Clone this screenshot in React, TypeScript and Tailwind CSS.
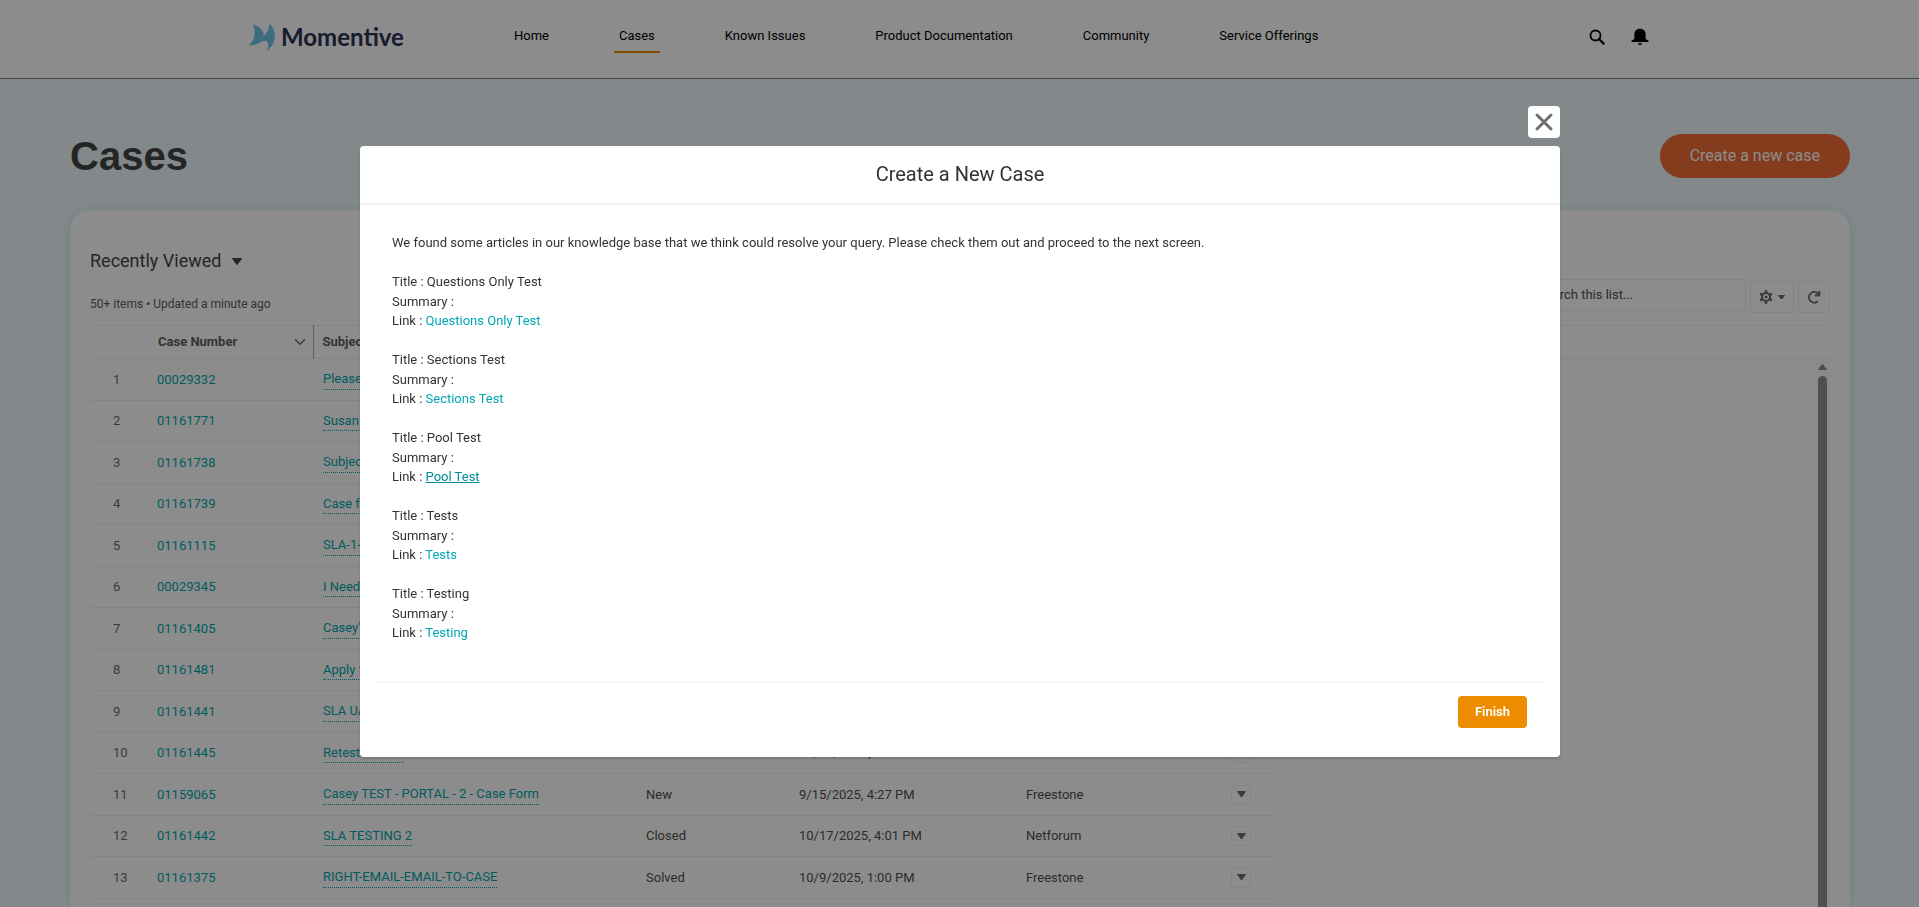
import { useState } from 'react';
import { ChevronDown, X } from 'lucide-react';

interface CaseRow {
    number: string;
    subject: string;
    status: string;
    opened: string;
    product: string;
}

const navItems = ['Home', 'Cases', 'Known Issues', 'Product Documentation', 'Community', 'Service Offerings'];

const cases: CaseRow[] = [
    { number: '00029332', subject: 'Please review', status: 'New', opened: '10/20/2025, 9:12 AM', product: 'Freestone' },
    { number: '01161771', subject: 'Susan Test', status: 'New', opened: '10/20/2025, 8:40 AM', product: 'Freestone' },
    { number: '01161738', subject: 'Subject Test', status: 'New', opened: '10/17/2025, 2:31 PM', product: 'Netforum' },
    { number: '01161739', subject: 'Case form', status: 'New', opened: '10/17/2025, 2:35 PM', product: 'Netforum' },
    { number: '01161115', subject: 'SLA-1-Test', status: 'Closed', opened: '10/2/2025, 1:15 PM', product: 'Freestone' },
    { number: '00029345', subject: 'I Need Help', status: 'New', opened: '9/29/2025, 3:08 PM', product: 'Freestone' },
    { number: '01161405', subject: "Casey's Test", status: 'Solved', opened: '10/9/2025, 4:20 PM', product: 'Freestone' },
    { number: '01161481', subject: 'Apply for Test', status: 'New', opened: '10/17/2025, 5:10 PM', product: 'Netforum' },
    { number: '01161441', subject: 'SLA UAT', status: 'Closed', opened: '10/17/2025, 3:55 PM', product: 'Netforum' },
    { number: '01161445', subject: 'Retest - SLA 2', status: 'New', opened: '10/17/2025, 4:12 PM', product: 'Netforum' },
    { number: '01159065', subject: 'Casey TEST - PORTAL - 2 - Case Form', status: 'New', opened: '9/15/2025, 4:27 PM', product: 'Freestone' },
    { number: '01161442', subject: 'SLA TESTING 2', status: 'Closed', opened: '10/17/2025, 4:01 PM', product: 'Netforum' },
    { number: '01161375', subject: 'RIGHT-EMAIL-EMAIL-TO-CASE', status: 'Solved', opened: '10/9/2025, 1:00 PM', product: 'Freestone' },
];

const articles = ['Questions Only Test', 'Sections Test', 'Pool Test', 'Tests', 'Testing'];

const Caret = ({ className }: { className: string }) => (
    <svg viewBox="0 0 10 7" className={className} fill="currentColor" aria-hidden="true">
        <path d="M0.6 0h8.8c.5 0 .7.5.4.9L5.6 6.6c-.3.4-.9.4-1.2 0L.2.9C-.1.5.1 0 .6 0z" />
    </svg>
);

const Logo = () => (
    <a href="#" className="flex items-center gap-[5px]" aria-label="Momentive">
        <svg viewBox="55 68 84 87" className="h-[29px] w-7" fill="#71c5e8" aria-hidden="true">
            <path d="M70 72C86 76 100 88 103 104C98 112 92 122 88 128C78 134 68 135 57 135C74 120 80 98 70 72z" />
            <path d="M120 70C142 92 142 125 112 153C116 142 118 130 113 124C106 117 94 124 86 131C92 122 97 112 103 106C112 98 118 86 120 70z" />
        </svg>
        <span className="font-['Lato'] text-2xl leading-7 font-bold text-[#2c3054]">Momentive</span>
    </a>
);

const Header = () => (
    <header className="flex h-[79px] items-center border-b border-[#798388] bg-white pr-[270px] pb-1 pl-[248px]">
        <div className="w-[261px]">
            <Logo />
        </div>
        <nav className="flex gap-[60px] text-[13px] text-black">
            {navItems.map((item) => (
                <a
                    key={item}
                    href="#"
                    className={`border-b-2 px-[5px] py-[5px] ${item === 'Cases' ? 'border-[#ee8c00]' : 'border-transparent'}`}
                >
                    {item}
                </a>
            ))}
        </nav>
        <div className="ml-auto flex items-center gap-[26px] text-black">
            <button type="button" aria-label="Search">
                <svg viewBox="0 0 16 16" className="size-4" fill="none" stroke="currentColor" aria-hidden="true">
                    <circle cx="6.5" cy="6.5" r="5" strokeWidth="1.8" />
                    <path d="M10 10l4.6 4.6" strokeWidth="2.2" strokeLinecap="round" />
                </svg>
            </button>
            <button type="button" aria-label="Notifications">
                <svg viewBox="0 0 18 18" className="size-[18px]" fill="currentColor" aria-hidden="true">
                    <path d="M9 .8c3.6 0 5.6 2.3 5.6 5.7V10c0 1 .9 1.600 2 2 .8.3 1 .6 1 1.300 0 .5-.2.7-.7.7H1.100c-.5 0-.7-.2-.7-.7 0-.7.2-1 1-1.300 1.100-.4 2-1 2-2V6.500C3.400 3.100 5.400.8 9 .8z" />
                    <path d="M7 15.300h4c0 1.100-.9 1.900-2 1.900s-2-.8-2-1.900z" />
                </svg>
            </button>
        </div>
    </header>
);

const CaseTable = () => (
    <table className="w-full table-fixed border-collapse text-left text-[13px]">
        <colgroup>
            <col className="w-[58px]" />
            <col className="w-[165px]" />
            <col className="w-[324px]" />
            <col className="w-[153px]" />
            <col className="w-[227px]" />
            <col className="w-[205px]" />
            <col className="w-[53px]" />
            <col />
        </colgroup>
        <thead>
            <tr className="h-[33px] border-y border-[#f1f1f1] text-[#605e5c]">
                <th></th>
                <th className="border-r border-[#a9a9a9] pr-1 pl-2.5">
                    <div className="flex items-center justify-between">
                        Case Number
                        <ChevronDown className="size-[18px] text-[#706e6b]" />
                    </div>
                </th>
                <th className="px-[9px]">Subject</th>
                <th className="px-[9px]">Status</th>
                <th className="px-[9px]">Date/Time Opened</th>
                <th className="px-[9px]">Product</th>
                <th></th>
                <th></th>
            </tr>
        </thead>
        <tbody className="text-[#505050]">
            {cases.map((row, index) => (
                <tr key={row.number} className="odd:h-[42px] even:h-[41px]">
                    <td className="border-b border-[#f1f1f1] pl-[23px] text-[#706e6b]">{index + 1}</td>
                    <td className="border-b border-[#f1f1f1] pl-[9px]">
                        <a href="#" className="text-[#00a8ae]">{row.number}</a>
                    </td>
                    <td className="border-b border-[#f1f1f1] pl-2.5">
                        <a href="#" className="inline-block border-b border-dotted border-[#00a8ae] text-[#00a8ae]">{row.subject}</a>
                    </td>
                    <td className="border-b border-[#f1f1f1] pl-[9px]">{row.status}</td>
                    <td className="border-b border-[#f1f1f1] pl-[9px]">{row.opened}</td>
                    <td className="border-b border-[#f1f1f1] pl-[9px]">{row.product}</td>
                    <td className="border-b border-[#f1f1f1] pl-[9px]">
                        <button
                            type="button"
                            aria-label="Show actions"
                            className="flex size-5 items-center justify-center rounded border border-[#f1f1f1] text-[#706e6b]"
                        >
                            <Caret className="w-[9px]" />
                        </button>
                    </td>
                    <td></td>
                </tr>
            ))}
        </tbody>
    </table>
);

const CaseList = () => (
    <section className="mt-8 flex flex-1 flex-col rounded-t-[20px] bg-white px-5 pt-[39px] shadow-[0_0_10px_rgba(0,120,160,0.12)]">
        <button type="button" className="flex items-center gap-[11px] self-start text-lg leading-6 text-[#444]">
            Recently Viewed
            <Caret className="w-2.5" />
        </button>
        <div className="mt-1.5 flex items-start justify-between">
            <p className="pt-[17px] text-xs text-[#605e5c]">50+ items • Updated a minute ago</p>
            <div className="flex items-start gap-1">
                <input
                    type="search"
                    aria-label="Search this list"
                    placeholder="Search this list..."
                    className="h-8 w-[246px] rounded border border-[#f0f0f0] pb-0.5 pl-[37px] text-[13px] placeholder:text-[#514f4d]"
                />
                <button type="button" aria-label="List view controls" className="mt-0.5 flex h-8 w-11 items-center justify-center gap-[5px] rounded border border-[#f0f0f0] text-[#706e6b]">
                    <svg viewBox="0 0 14 14" className="size-3.5" fill="none" stroke="currentColor" aria-hidden="true">
                        <circle cx="7" cy="7" r="4" strokeWidth="2" />
                        <circle cx="7" cy="7" r="1.5" fill="currentColor" stroke="none" />
                        <path d="M7 .2v2.600M7 11.200v2.600M1.100 3.600l2.300 1.300M10.600 9.100l2.300 1.300M1.100 10.400l2.300-1.300M10.600 4.900l2.300-1.300" strokeWidth="2.600" />
                    </svg>
                    <Caret className="w-[7px]" />
                </button>
                <button type="button" aria-label="Refresh" className="mt-0.5 flex size-8 items-center justify-center rounded border border-[#f0f0f0] text-[#706e6b]">
                    <svg viewBox="0 0 14 14" className="size-3.5" fill="none" stroke="currentColor" strokeWidth="2" aria-hidden="true">
                        <path d="M10.800 11.300A5.300 5.300 0 1 1 10.500 3.200L12 4.800" />
                        <path d="M12.300 1v4.500H7.800" />
                    </svg>
                </button>
            </div>
        </div>
        <div className="relative mt-3 flex-1">
            <CaseTable />
            <div className="absolute top-[34px] right-0 bottom-0 flex w-[15px] flex-col items-center gap-1.5 bg-[#fcfcfc] pt-[5px] text-[#8b8b8b]">
                <Caret className="w-[9px] rotate-180" />
                <div className="w-[9px] flex-1 rounded-t-full bg-[#919191]" />
            </div>
        </div>
    </section>
);

const NewCaseModal = ({ onClose }: { onClose: () => void }) => (
    <div className="fixed inset-0 flex flex-col items-center bg-black/45 pt-[106px] pl-px">
        <div role="dialog" aria-labelledby="modal-title" className="flex w-[1200px] max-w-full flex-col items-end gap-2 text-[#333]">
            <button type="button" aria-label="Close" onClick={onClose} className="flex size-8 items-center justify-center rounded bg-white text-[#706e6b]">
                <X className="size-7" strokeWidth={2.5} />
            </button>
            <div className="w-full rounded bg-white shadow-[0_2px_3px_rgba(0,0,0,0.16)]">
                <h2 id="modal-title" className="border-b-2 border-[#f3f3f3] py-4 text-center text-xl leading-[25px]">
                    Create a New Case
                </h2>
                <div className="px-8 pt-7 text-[13px] leading-normal">
                    <p>We found some articles in our knowledge base that we think could resolve your query. Please check them out and proceed to the next screen.</p>
                    {articles.map((article) => (
                        <p key={article}>
                            <br />
                            Title : {article}
                            <br />
                            Summary :
                            <br />
                            Link : <a href="#" className={article === 'Pool Test' ? 'text-[#008c94] underline' : 'text-[#00a8b4]'}>{article}</a>
                        </p>
                    ))}
                </div>
                <div className="mx-4 mt-[39px] flex justify-end border-t border-[#f3f3f3] pt-[13px] pr-[17px] pb-[29px]">
                    <button type="button" onClick={onClose} className="h-8 rounded bg-[#ee8c00] px-[17px] text-[13px] font-semibold text-white">
                        Finish
                    </button>
                </div>
            </div>
        </div>
    </div>
);

const App = () => {
    const [open, setOpen] = useState(true);

    return (
        <div className="flex h-screen flex-col overflow-hidden bg-[#eff8fc] font-['Roboto',sans-serif]">
            <Header />
            <main className="flex flex-1 flex-col pt-[55px] pr-[69px] pl-[70px]">
                <div className="flex h-11 items-center justify-between">
                    <h1 className="font-['Liberation_Sans',sans-serif] text-[40px] font-bold text-[#444]">Cases</h1>
                    <button type="button" onClick={() => setOpen(true)} className="h-11 rounded-full bg-[#f26d36] px-[30px] text-base text-white">
                        Create a new case
                    </button>
                </div>
                <CaseList />
            </main>
            {open && <NewCaseModal onClose={() => setOpen(false)} />}
        </div>
    );
};

export default App;
